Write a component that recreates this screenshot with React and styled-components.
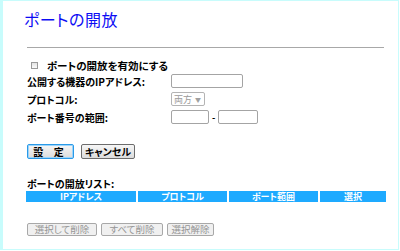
import React from 'react';
import styled, { createGlobalStyle } from 'styled-components';

const GlobalStyle = createGlobalStyle`
  body {
    margin: 0;
    background: #ffffff;
    font-family: "Noto Sans CJK JP", "Liberation Sans", sans-serif;
  }
`;

const Page = styled.div`
  box-sizing: border-box;
  width: 399px;
  height: 250px;
  border: 1px solid #c8fcfc;
  border-left-width: 3px;
  padding: 0 14px 0 24px;
  display: flex;
  flex-direction: column;
  font-feature-settings: 'palt';
  color: #000;
`;

const Title = styled.h1`
  margin: 7px 0 0 -3px;
  height: 22px;
  font-size: 16px;
  line-height: 22px;
  font-weight: normal;
  color: #0c0cf4;
  letter-spacing: 0.5px;
`;

const Rule = styled.div`
  margin-top: 17px;
  height: 1px;
  background: #a8a8a8;
`;

const CheckRow = styled.div`
  margin-top: 10px;
  height: 14px;
  display: flex;
  align-items: center;
  padding-left: 4px;
  gap: 9px;
  font-size: 10.5px;
  font-weight: bold;
`;

const Check = styled.span`
  box-sizing: border-box;
  width: 7px;
  height: 7px;
  border: 1px solid #9a9a9a;
  background: linear-gradient(#e4e4e4, #fafafa);
`;

const FormRow = styled.div`
  height: 18px;
  display: grid;
  grid-template-columns: 144px auto;
  align-items: center;
  font-size: 10px;
  font-weight: bold;
`;

const Controls = styled.div`
  display: flex;
  align-items: center;
  gap: 3px;
`;

const TextBox = styled.span`
  box-sizing: border-box;
  display: block;
  width: ${p => p.$w}px;
  height: 14px;
  border: 1px solid #a4a4a4;
  border-radius: 2px;
  background: #fff;
`;

const Select = styled.span`
  box-sizing: border-box;
  width: 34px;
  height: 14px;
  border: 1px solid #b4b4b4;
  border-radius: 2px;
  display: flex;
  align-items: center;
  justify-content: space-between;
  padding: 0 3px 0 2px;
  font-size: 9px;
  font-weight: normal;
  color: #9a9a9a;
`;

const Arrow = styled.span`
  font-size: 6px;
  color: #a0a0a0;
`;

const Dash = styled.span`
  font-size: 9px;
  font-weight: bold;
  width: 3px;
  text-align: center;
`;

const ButtonRow = styled.div`
  margin-top: ${p => p.$mt}px;
  display: flex;
  gap: ${p => p.$gap}px;
`;

const Button = styled.button`
  box-sizing: border-box;
  width: ${p => p.$w}px;
  height: ${p => p.$h || 15}px;
  padding: 0;
  border: 1px solid ${p => (p.$focus ? '#2a9ae8' : p.$off ? '#a8a8a8' : '#6c6c6c')};
  border-radius: 2px;
  background: ${p => (p.$off ? '#f0f0f0' : 'linear-gradient(#f6f6f6, #dcdcdc)')};
  font-family: inherit;
  font-feature-settings: 'palt';
  font-size: ${p => (p.$off ? 9.5 : 10)}px;
  font-weight: ${p => (p.$off ? 'normal' : 'bold')};
  letter-spacing: ${p => p.$ls || 0}px;
  color: ${p => (p.$off ? '#959595' : '#000')};
  line-height: 1;
  box-shadow: ${p => (p.$focus ? 'inset 0 0 0 1px #9cd4fa' : 'none')};
`;

const ListTitle = styled.div`
  margin-top: 18px;
  height: 14px;
  line-height: 14px;
  font-size: 10px;
  font-weight: bold;
`;

const Header = styled.div`
  margin-left: -1px;
  width: 360px;
  display: grid;
  grid-template-columns: 110px 89px 89px 1fr;
  gap: 2px;
`;

const HeadCell = styled.div`
  height: 11px;
  background: #1eaaff;
  color: #fff;
  font-size: 9px;
  font-weight: bold;
  line-height: 11px;
  text-align: center;
`;

export default function App() {
  return (
    <>
      <GlobalStyle />
      <Page>
        <Title>ポートの開放</Title>
        <Rule />
        <CheckRow>
          <Check />
          <span>ポートの開放を有効にする</span>
        </CheckRow>
        <FormRow>
          <span>公開する機器のIPアドレス:</span>
          <Controls><TextBox $w={72} /></Controls>
        </FormRow>
        <FormRow>
          <span>プロトコル:</span>
          <Controls>
            <Select>両方<Arrow>▼</Arrow></Select>
          </Controls>
        </FormRow>
        <FormRow>
          <span>ポート番号の範囲:</span>
          <Controls>
            <TextBox $w={38} />
            <Dash>-</Dash>
            <TextBox $w={40} />
          </Controls>
        </FormRow>
        <ButtonRow $gap={7} $mt={18}>
          <Button $w={47} $focus $ls={4}>設 定</Button>
          <Button $w={54}>キャンセル</Button>
        </ButtonRow>
        <ListTitle>ポートの開放リスト:</ListTitle>
        <Header>
          <HeadCell>IPアドレス</HeadCell>
          <HeadCell>プロトコル</HeadCell>
          <HeadCell>ポート範囲</HeadCell>
          <HeadCell>選択</HeadCell>
        </Header>
        <ButtonRow $gap={4} $mt={21}>
          <Button $w={70} $h={13} $off>選択して削除</Button>
          <Button $w={62} $h={13} $off>すべて削除</Button>
          <Button $w={47} $h={13} $off>選択解除</Button>
        </ButtonRow>
      </Page>
    </>
  );
}
